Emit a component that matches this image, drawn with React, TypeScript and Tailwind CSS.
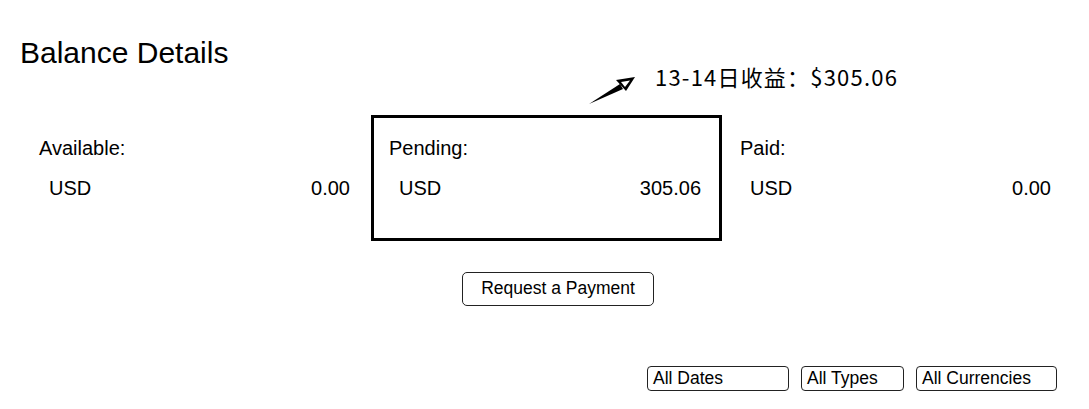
import React from 'react'

const sans = "font-['Liberation_Sans',Arial,sans-serif]"

type Col = { label: string; value: string; boxed?: boolean; width: string }

const cols: Col[] = [
  { label: 'Available:', value: '0.00', width: 'w-[350px]' },
  { label: 'Pending:', value: '305.06', boxed: true, width: 'w-[351px]' },
  { label: 'Paid:', value: '0.00', width: 'w-[350px]' },
]

function Arrow() {
  return (
    <svg
      width="52"
      height="34"
      viewBox="0 0 52 34"
      className="absolute left-[586px] top-[74px]"
    >
      {/* shaft, thin at the tail */}
      <polygon points="3,30 34,10 37,15" fill="#000" />
      {/* head */}
      <polygon points="30,6 49,3 40,17" fill="#000" />
      <polygon points="35,8 44,6.5 39,13" fill="#fff" />
    </svg>
  )
}

export default function App() {
  return (
    <main className={`relative w-[1089px] h-[409px] bg-white text-black ${sans} pl-[20px]`}>
      <h1 className="pt-[38px] text-[30px] leading-[30px] font-normal">
        Balance Details
      </h1>

      <Arrow />
      <p className="absolute left-[655px] top-[65px] text-[22px] leading-none tracking-[1.2px] font-['Noto_Sans_CJK_SC','Microsoft_YaHei',sans-serif]">
        13-14日收益：$305.06
      </p>

      <div className="flex mt-[47px] ml-px">
        {cols.map((c) => (
          <div
            key={c.label}
            className={`${c.width} h-[126px] border-[3px] ${c.boxed ? 'border-black' : 'border-transparent'} pl-[15px] pr-[18px] pt-[18px]`}
          >
            <p className="text-[20px] leading-[24px]">{c.label}</p>
            <div className="flex justify-between mt-[16px] text-[20px] leading-[24px]">
              <span className="ml-[10px]">USD</span>
              <span>{c.value}</span>
            </div>
          </div>
        ))}
      </div>

      <button className="mt-[31px] ml-[442px] w-[192px] h-[34px] border border-[#222] rounded-[5px] text-[17.5px] leading-none flex items-center justify-center">
        Request a Payment
      </button>

      <div className="flex justify-end gap-[12px] pr-[32px] mt-[60px] text-[17.5px] leading-none">
        <div className="w-[142px] h-[25px] border border-[#222] rounded-[4px] pl-[5px] flex items-center">
          All Dates
        </div>
        <div className="w-[103px] h-[25px] border border-[#222] rounded-[4px] pl-[5px] flex items-center">
          All Types
        </div>
        <div className="w-[141px] h-[25px] border border-[#222] rounded-[4px] pl-[5px] flex items-center">
          All Currencies
        </div>
      </div>
    </main>
  )
}
